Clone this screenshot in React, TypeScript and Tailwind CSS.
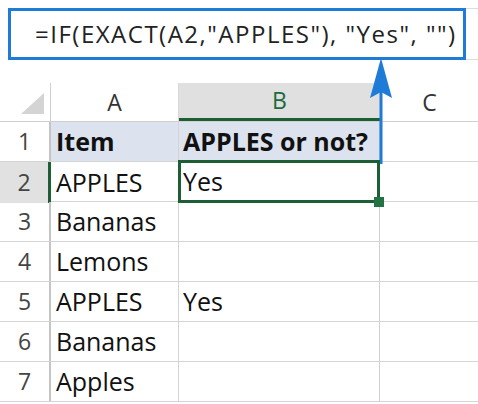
import React from 'react'

const rows = [
  { n: '1', a: 'Item', b: 'APPLES or not?', head: true },
  { n: '2', a: 'APPLES', b: 'Yes', active: true },
  { n: '3', a: 'Bananas', b: '' },
  { n: '4', a: 'Lemons', b: '' },
  { n: '5', a: 'APPLES', b: 'Yes' },
  { n: '6', a: 'Bananas', b: '' },
  { n: '7', a: 'Apples', b: '' },
]

export default function App() {
  return (
    <div
      className="relative w-[478px] h-[404px] overflow-hidden bg-white text-[#111]"
      style={{ fontFamily: '"Open Sans", "Noto Sans", sans-serif' }}
    >
      {/* formula bar */}
      <div className="pt-[8px] flex items-stretch">
        <div className="ml-[8px] w-[458px] h-[52px] border-[3px] border-[#1f7bd8] flex items-center pl-[24px] text-[24px] tracking-[1.5px] text-[#222] whitespace-nowrap">
          =IF(EXACT(A2,"APPLES"), "Yes", "")
        </div>
        <div className="flex-1 border-y border-[#dcdcdc]" />
      </div>

      {/* column headers */}
      <div className="mt-[23px] grid grid-cols-[51px_128px_201px_1fr] h-[39px] border-b border-[#cfcfcf]">
        <div className="relative border-r border-[#cfcfcf]">
          <svg className="absolute left-[21px] top-[10px]" width="24" height="22" viewBox="0 0 24 22">
            <polygon points="0,21 23,0 23,21" fill="#d4d4d4" />
          </svg>
        </div>
        <div className="flex items-center justify-center text-[23px] text-[#333] border-r border-[#d8d8d8]">A</div>
        <div className="flex items-center justify-center text-[23px] text-[#1d6b3c] bg-[#e0e0e0] border-b-[3px] border-[#1d5e35]">B</div>
        <div className="flex items-center justify-center text-[23px] text-[#333] border-l border-[#d8d8d8]">C</div>
      </div>

      {/* rows */}
      {rows.map((r) => (
        <div key={r.n} className="grid grid-cols-[51px_128px_201px_1fr] h-[40px] border-b border-[#d4d4d4]">
          <div
            className={`flex items-center justify-center text-[23px] text-[#444] ${
              r.active ? 'bg-[#e1e1e1] border-r-[3px] border-[#1d5e35]' : 'border-r-2 border-[#c4c4c4]'
            }`}
          >
            {r.n}
          </div>
          <div
            className={`flex items-center pl-[5px] text-[25px] border-r border-[#d4d4d4] ${
              r.head ? 'bg-[#dce3ee] font-bold' : ''
            }`}
          >
            {r.a}
          </div>
          <div
            className={`relative flex items-center text-[25px] ${r.head ? 'bg-[#dce3ee] font-bold' : ''} ${
              r.active
                ? 'pl-[2px] border-[3px] border-[#1d5e35] -mt-[2px] -ml-px h-[43px] z-10'
                : 'pl-[4px] border-r border-[#cfcfcf]'
            }`}
          >
            {r.b}
            {r.active && (
              <div className="absolute right-[-7px] bottom-[-7px] w-[10px] h-[10px] bg-[#217346] z-10" />
            )}
          </div>
          <div />
        </div>
      ))}

      {/* arrow */}
      <svg className="absolute left-[368px] top-[58px]" width="26" height="106" viewBox="0 0 26 106">
        <rect x="11.5" y="20" width="3" height="86" fill="#1f7bd8" />
        <polygon points="13,0 24,40 13,34 2,40" fill="#1f7bd8" />
      </svg>
    </div>
  )
}
